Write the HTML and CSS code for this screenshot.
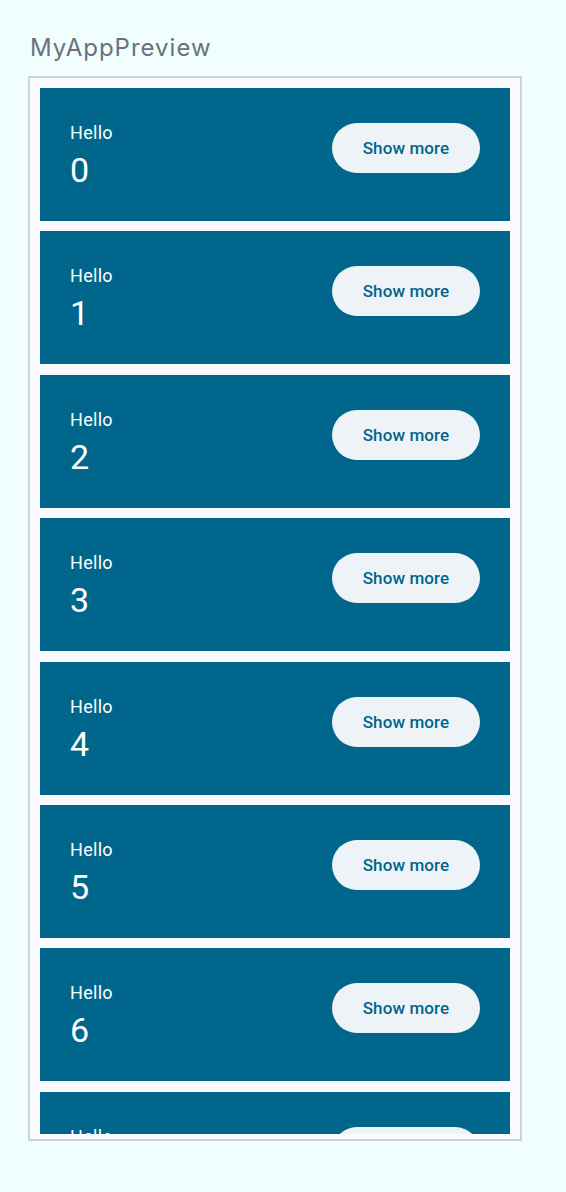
FILE: index.html
```html
<!DOCTYPE html>
<html lang="en">
<head>
    <meta charset="UTF-8">
    <meta name="viewport" content="width=device-width, initial-scale=1.0">
    <title>MyAppPreview</title>
    <link rel="stylesheet" href="styles.css">
</head>
<body>
    <h1 class="preview-title">MyAppPreview</h1>

    <div class="preview-frame">
        <div class="greeting-list">
            <div class="greeting-card">
                <div class="greeting-text">
                    <p class="greeting-label">Hello</p>
                    <p class="greeting-name">0</p>
                </div>
                <button class="show-more">Show more</button>
            </div>
            <div class="greeting-card">
                <div class="greeting-text">
                    <p class="greeting-label">Hello</p>
                    <p class="greeting-name">1</p>
                </div>
                <button class="show-more">Show more</button>
            </div>
            <div class="greeting-card">
                <div class="greeting-text">
                    <p class="greeting-label">Hello</p>
                    <p class="greeting-name">2</p>
                </div>
                <button class="show-more">Show more</button>
            </div>
            <div class="greeting-card">
                <div class="greeting-text">
                    <p class="greeting-label">Hello</p>
                    <p class="greeting-name">3</p>
                </div>
                <button class="show-more">Show more</button>
            </div>
            <div class="greeting-card">
                <div class="greeting-text">
                    <p class="greeting-label">Hello</p>
                    <p class="greeting-name">4</p>
                </div>
                <button class="show-more">Show more</button>
            </div>
            <div class="greeting-card">
                <div class="greeting-text">
                    <p class="greeting-label">Hello</p>
                    <p class="greeting-name">5</p>
                </div>
                <button class="show-more">Show more</button>
            </div>
            <div class="greeting-card">
                <div class="greeting-text">
                    <p class="greeting-label">Hello</p>
                    <p class="greeting-name">6</p>
                </div>
                <button class="show-more">Show more</button>
            </div>
            <div class="greeting-card">
                <div class="greeting-text">
                    <p class="greeting-label">Hello</p>
                    <p class="greeting-name">7</p>
                </div>
                <button class="show-more">Show more</button>
            </div>
        </div>
    </div>
</body>
</html>
```

FILE: styles.css
```css
body {
    margin: 0;
    background-color: #f0fffe;
    font-family: Roboto, 'Liberation Sans', sans-serif;
}

.preview-title {
    margin: 34px 0 0 30px;
    font-family: Inter, 'Noto Sans', sans-serif;
    font-size: 24px;
    font-weight: 400;
    line-height: 28px;
    letter-spacing: 1px;
    color: #6c707e;
}

.preview-frame {
    box-sizing: border-box;
    width: 494px;
    margin: 14px 0 0 28px;
    padding: 10px 10px 5px;
    background-color: #fbfbff;
    border: 2px solid #c9d5d6;
}

.greeting-list {
    display: flex;
    flex-direction: column;
    gap: 10.4px;
    height: 1046px;
    overflow: hidden;
}

.greeting-card {
    flex-shrink: 0;
    box-sizing: border-box;
    height: 133px;
    padding: 33px 30px 0;
    display: flex;
    justify-content: space-between;
    align-items: flex-start;
    background-color: #00668b;
    color: #fff;
}

.greeting-text p {
    margin: 0;
}

.greeting-label {
    font-size: 18px;
    line-height: 24px;
    letter-spacing: 0.3px;
}

.greeting-name {
    margin-top: 4px !important;
    font-size: 34px;
    line-height: 42px;
}

.show-more {
    margin-top: 2px;
    width: 148px;
    height: 50px;
    border: none;
    border-radius: 25px;
    background-color: #eef3f8;
    color: #00668b;
    font-family: Roboto, 'Liberation Sans', sans-serif;
    font-size: 17px;
    font-weight: 500;
    letter-spacing: 0.1px;
    cursor: pointer;
}
```
